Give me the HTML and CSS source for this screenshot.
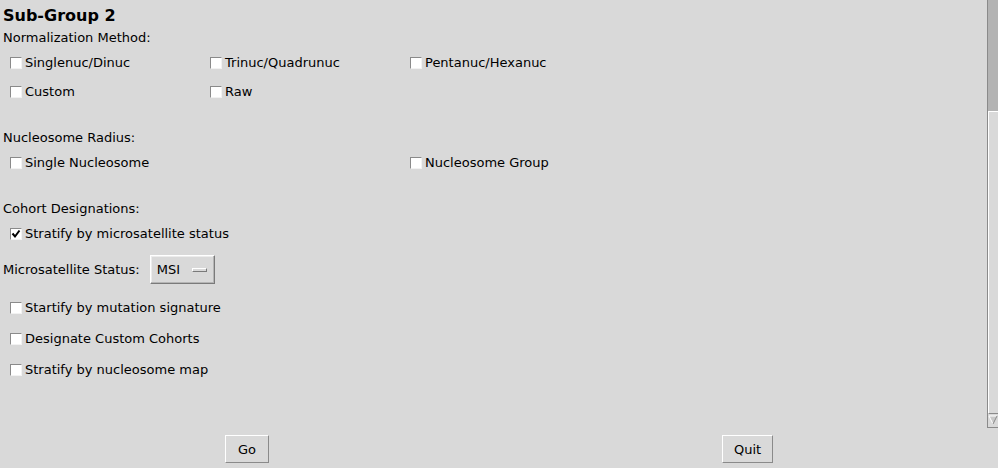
FILE: index.html
```html
<!DOCTYPE html>
<html>
<head>
<meta charset="utf-8">
<link rel="stylesheet" href="styles.css">
</head>
<body>
<div class="app">
  <div class="main">
    <div class="content">
      <h1 class="title">Sub-Group 2</h1>
      <div class="label">Normalization Method:</div>
      <div class="grid3">
        <div class="cb"><span class="box"></span><span class="txt">Singlenuc/Dinuc</span></div>
        <div class="cb"><span class="box"></span><span class="txt">Trinuc/Quadrunuc</span></div>
        <div class="cb"><span class="box"></span><span class="txt">Pentanuc/Hexanuc</span></div>
        <div class="cb"><span class="box"></span><span class="txt">Custom</span></div>
        <div class="cb"><span class="box"></span><span class="txt">Raw</span></div>
      </div>
      <div class="label gap">Nucleosome Radius:</div>
      <div class="grid3">
        <div class="cb"><span class="box"></span><span class="txt">Single Nucleosome</span></div>
        <div></div>
        <div class="cb"><span class="box"></span><span class="txt">Nucleosome Group</span></div>
      </div>
      <div class="label gap">Cohort Designations:</div>
      <div class="grid3">
        <div class="cb wide"><span class="box"><svg width="10" height="10" viewBox="0 0 10 10"><polyline points="1.5,4.5 4,7.5 8.5,1.5" fill="none" stroke="#000" stroke-width="2"/></svg></span><span class="txt">Stratify by microsatellite status</span></div>
      </div>
      <div class="msrow">
        <span class="mslabel">Microsatellite Status:</span>
        <span class="menubtn"><span class="mtxt">MSI</span><span class="ind"></span></span>
      </div>
      <div class="list">
        <div class="cb tall"><span class="box"></span><span class="txt">Startify by mutation signature</span></div>
        <div class="cb tall"><span class="box"></span><span class="txt">Designate Custom Cohorts</span></div>
        <div class="cb tall"><span class="box"></span><span class="txt">Stratify by nucleosome map</span></div>
      </div>
    </div>
    <div class="scrollbar">
      <div class="trough"></div>
      <div class="slider"></div>
      <div class="arrow"><svg width="10" height="12" viewBox="0 0 10 12"><polygon points="1,2 9,2 5,10" fill="#c8c8c8"/><polyline points="1,2 9,2" stroke="#fff" stroke-width="1" fill="none"/><polyline points="1,2 5,10" stroke="#fff" stroke-width="1" fill="none"/><polyline points="9,2 5,10" stroke="#8a8a8a" stroke-width="1" fill="none"/></svg></div>
    </div>
  </div>
  <div class="bottom">
    <div class="cell"><button class="btn">Go</button></div>
    <div class="cell right"><button class="btn quit">Quit</button></div>
  </div>
</div>
</body>
</html>
```
FILE: styles.css
```css
html, body {
  margin: 0;
  padding: 0;
  background: #d9d9d9;
}
body {
  font-family: "DejaVu Sans", sans-serif;
  font-size: 13px;
  color: #000;
}
.app {
  width: 998px;
  height: 468px;
  display: flex;
  flex-direction: column;
  overflow: hidden;
}
.main {
  display: flex;
  height: 428px;
}
.content {
  flex: 1;
  padding-left: 3px;
}
.title {
  font-size: 16px;
  font-weight: 700;
  line-height: 19px;
  margin: 6px 0 0 0;
}
.label {
  line-height: 15px;
  margin-top: 5px;
}
.label.gap {
  margin-top: 24px;
}
.grid3 {
  display: grid;
  grid-template-columns: 200px 200px 200px;
  margin-top: 3px;
  padding-left: 7px;
}
.cb {
  display: flex;
  align-items: center;
  height: 29px;
  white-space: nowrap;
}
.cb.wide {
  grid-column: 1 / 4;
}
.cb.tall {
  height: 31px;
}
.box {
  box-sizing: border-box;
  width: 12px;
  height: 12px;
  background: #fff;
  border: 1px solid;
  border-color: #8a8a8a #f2f2f2 #f2f2f2 #8a8a8a;
  margin-top: 1px;
  margin-right: 3px;
  display: flex;
  align-items: center;
  justify-content: center;
}
.box svg {
  display: block;
}
.txt {
  line-height: 15px;
}
.msrow {
  display: flex;
  align-items: center;
  height: 29px;
  margin-top: 7px;
}
.mslabel {
  line-height: 15px;
}
.menubtn {
  box-sizing: border-box;
  margin-left: 10px;
  width: 65px;
  height: 29px;
  display: flex;
  align-items: center;
  padding-left: 6px;
  border: 1px solid;
  border-color: #fff #7a7a7a #7a7a7a #fff;
  box-shadow: inset -1px -1px 0 #b5b5b5, inset 1px 1px 0 #ececec;
}
.mtxt {
  line-height: 15px;
}
.ind {
  box-sizing: border-box;
  width: 15px;
  height: 4px;
  margin-left: 12px;
  border: 1px solid;
  border-color: #fff #7a7a7a #7a7a7a #fff;
  background: #d9d9d9;
}
.list {
  margin-top: 8px;
  padding-left: 7px;
}
.scrollbar {
  width: 11px;
  box-sizing: border-box;
  border-left: 1px solid #8a8a8a;
  display: flex;
  flex-direction: column;
  background: #b3b3b3;
}
.trough {
  height: 111px;
  background: #b3b3b3;
}
.slider {
  flex: 1;
  background: #d9d9d9;
  border-top: 1px solid #fff;
  border-left: 1px solid #fff;
  border-bottom: 1px solid #8a8a8a;
}
.arrow {
  height: 13px;
  background: #d9d9d9;
  border-bottom: 1px solid #8a8a8a;
  display: flex;
  align-items: flex-start;
}
.arrow svg {
  display: block;
}
.bottom {
  display: grid;
  grid-template-columns: 494px 1fr;
  padding-top: 7px;
}
.cell {
  display: flex;
  justify-content: center;
}
.cell.right {
  padding-left: 3px;
}
.btn {
  font-family: "DejaVu Sans", sans-serif;
  font-size: 13px;
  color: #000;
  background: #d9d9d9;
  height: 28px;
  padding: 0 12px;
  margin: 0;
  line-height: 15px;
  border: 1px solid;
  border-color: #fff #8a8a8a #8a8a8a #fff;
  border-radius: 0;
}
.btn.quit {
  padding: 0 11px;
}
```
